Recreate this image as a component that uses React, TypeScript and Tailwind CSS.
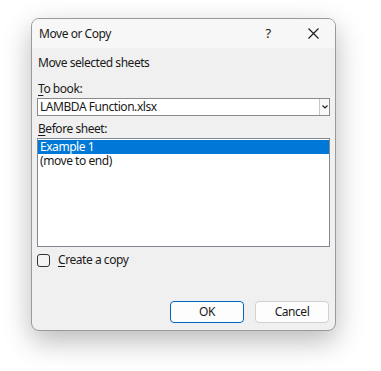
import React from "react";

export default function App() {
  const font = { fontFamily: '"Noto Sans", "Open Sans", sans-serif' };
  return (
    <div className="w-[381px] h-[371px] bg-white pt-[18px] pl-[31px]" style={font}>
      <div className="w-[305px] h-[313px] flex flex-col border border-[#9a9a9a] rounded-[8px] bg-[#f0f0f0] shadow-[0_10px_28px_rgba(0,0,0,0.28)] overflow-hidden text-[12px] tracking-[-0.45px] text-[#1a1a1a]">
        <div className="h-[29px] flex items-center bg-[#f7f7f7] pl-[7px] pr-[12px]">
          <span className="flex-1 leading-none">Move or Copy</span>
          <span className="w-[10px] text-center mr-[35px] text-[13px] leading-none">?</span>
          <svg width="11" height="11" viewBox="0 0 11 11" className="mr-[4px]">
            <path d="M0.5 0.5 L10.5 10.5 M10.5 0.5 L0.5 10.5" stroke="#1a1a1a" strokeWidth="1.1" />
          </svg>
        </div>
        <div className="flex-1 flex flex-col px-[5px] pb-[7px]">
          <div className="mt-[7px] h-[16px] leading-[16px] pl-[1px]">Move selected sheets</div>
          <div className="mt-[10px] h-[16px] leading-[16px] pl-[1px]">
            <span className="underline underline-offset-2">T</span>o book:
          </div>
          <div className="mt-[1px] h-[18px] flex bg-white border border-[#8a8a8a]">
            <span className="flex-1 pl-[2px] leading-[16px]">LAMBDA Function.xlsx</span>
            <div className="w-[10px] border-l border-[#c8c8c8] bg-[#f8f8f8] flex items-center justify-center">
              <svg width="6" height="4" viewBox="0 0 6 4">
                <path d="M0.5 0.5 L3 3 L5.5 0.5" stroke="#222" strokeWidth="1.2" fill="none" />
              </svg>
            </div>
          </div>
          <div className="mt-[5px] h-[16px] leading-[16px] pl-[1px]">
            <span className="underline underline-offset-2">B</span>efore sheet:
          </div>
          <div className="mt-[1px] h-[109px] bg-white border border-[#828790] pt-[1px]">
            <div className="h-[14px] bg-[#0078d7] text-white leading-[14px] pl-[2px]">Example 1</div>
            <div className="h-[14px] leading-[14px] pl-[2px]">(move to end)</div>
          </div>
          <div className="mt-[5px] h-[16px] flex items-center">
            <div className="w-[13px] h-[13px] border border-[#333] rounded-[3px] bg-[#f4f4f4]" />
            <span className="ml-[8px] leading-[16px]">
              <span className="underline underline-offset-2">C</span>reate a copy
            </span>
          </div>
          <div className="mt-auto flex justify-end gap-[11px] pr-[1px]">
            <button className="w-[74px] h-[22px] rounded-[4px] border border-[#0067c0] bg-[#fdfdfd] text-[12px] leading-none">OK</button>
            <button className="w-[74px] h-[22px] rounded-[4px] border border-[#d0d0d0] bg-[#fdfdfd] text-[12px] leading-none">Cancel</button>
          </div>
        </div>
      </div>
    </div>
  );
}
